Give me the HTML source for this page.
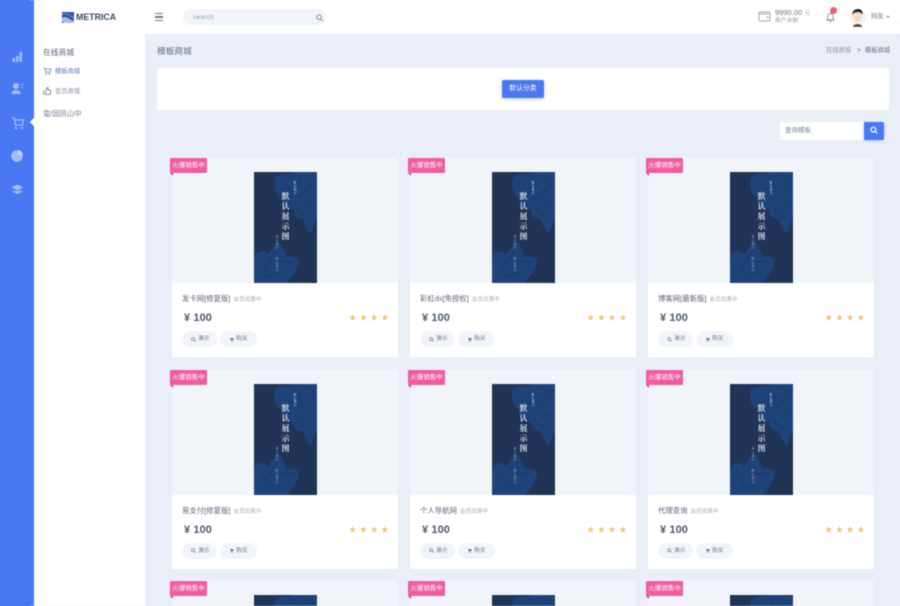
<!DOCTYPE html>
<html lang="zh"><head><meta charset="utf-8"><title>模板商城</title>
<style>
*{box-sizing:border-box}
html,body{margin:0;padding:0;width:900px;height:606px;overflow:hidden}
body{position:relative;background:#e9eef7;font-family:"Liberation Sans","Noto Sans CJK SC",sans-serif;color:#50596e}
#wrap{position:absolute;left:0;top:0;width:900px;height:606px;filter:blur(.5px);overflow:hidden}
.a{position:absolute;white-space:nowrap}
.card{position:absolute;width:226px;height:200px;background:#fff}
.short{height:26px}
.img{position:absolute;left:0;top:0;width:226px;height:126px;background:#f1f5fa}
.short .img{height:26px}
.cover{position:absolute;left:82px;top:15px;width:63px;height:111px;display:block}
.clip{position:absolute;left:82px;top:15px;width:63px;height:11px;overflow:hidden}
.clip svg{display:block;width:63px;height:111px}
.badge{position:absolute;left:-2px;top:1px;width:37px;height:15px;background:#f05c9e;color:#fff;font-size:6.500px;line-height:15px;text-align:center;border-radius:1px}
.badge:after{content:"";position:absolute;left:0;top:15px;border-top:3px solid #c4447f;border-left:3px solid transparent}
.t{position:absolute;left:10px;top:136px;font-size:7.400px;line-height:12px;color:#5d6678;white-space:nowrap}
.t small{font-size:5.600px;color:#a4abb8;margin-left:1px}
.p{position:absolute;left:12px;top:154px;font-size:11px;line-height:14px;font-weight:bold;color:#50596e;letter-spacing:.1px}
.s{position:absolute;left:177px;top:154px;font-size:7.500px;line-height:14px;color:#e9c675;letter-spacing:3.200px;white-space:nowrap}
.b{position:absolute;top:174px;height:16px;background:#f1f5fa;border-radius:8px;font-size:5.800px;line-height:16px;color:#717a8c;white-space:nowrap}
.b svg{position:absolute;left:9px;top:5.500px;width:5px;height:5px}
.b span{position:absolute;left:16px;top:0}
.b1{left:10px;width:35px}.b2{left:48px;width:37px}
.cw{position:absolute;left:82px;top:15px;width:63px;height:111px;color:#dfe6f1;font-family:"Liberation Serif","Noto Serif CJK SC",serif}
.cw i{position:absolute;font-style:normal;writing-mode:vertical-rl;white-space:nowrap}
.cw .m{left:27px;top:20px;font-size:7.800px;line-height:9px;letter-spacing:2.200px;font-weight:bold}
.cw .n{left:39px;top:9px;font-size:2.800px;line-height:3px;letter-spacing:.7px}
.cw .u{left:21px;top:63px;font-size:2.800px;line-height:3px;letter-spacing:1px;color:#a9b8d0}
.cw .v{left:21px;top:85px;font-size:2.800px;line-height:3px;letter-spacing:1px;color:#a9b8d0}
</style></head><body>
<div class="a" style="left:0;top:0;width:20px;height:606px;background:#4a78f5"></div>
<div class="a" style="left:40px;top:0;width:860px;height:20px;background:#fff"></div>
<div class="a" style="left:20px;top:0;width:10px;height:606px;background:#4a78f5"></div>
<div id="wrap">
<svg width="0" height="0" style="position:absolute"><defs>
<symbol id="cv" viewBox="0 0 63 111">
<rect width="63" height="111" fill="#1f3456"/>
<g fill="#1e4379">
<path d="M21 5C28 0 36 3 40 0H63V45L57 62C53 58 50 53 49 47 43 48 39 44 39 37 33 38 27 33 28 26 22 24 18 15 21 5Z"/>
<path d="M1 82C7 77 12 79 14 83 17 77 21 72 25 70 29 75 32 80 32 85 37 83 44 85 45 89 44 98 39 105 32 111H0V92Z"/>
</g>
<g fill="none" stroke="#1b3a68" stroke-width=".9">
<path d="M38 3L46 15M31 12L44 26M44 26L60 11M50 34L62 28M42 35L54 47M48 2L60 8M13 93L24 76M24 90L40 90M9 105L29 100M5 86L14 100"/>
</g>
</symbol>
<symbol id="mg" viewBox="0 0 6 6"><circle cx="2.500" cy="2.500" r="1.800" fill="none" stroke="#717a8c" stroke-width=".8"/><path d="M3.800 3.800L5.500 5.500" stroke="#717a8c" stroke-width=".8"/></symbol>
<symbol id="ct" viewBox="0 0 6 6"><path d="M.5 .8h1l.5 3h3l.5-2.300H2z" fill="#5d6678"/><circle cx="2.500" cy="5" r=".6" fill="#5d6678"/><circle cx="4.500" cy="5" r=".6" fill="#5d6678"/></symbol>
</defs></svg>

<!-- sidebar -->
<div class="a" style="left:0;top:0;width:34px;height:606px;background:#4a78f5"></div>
<div class="a" style="left:34px;top:34px;width:111px;height:572px;background:#fff"></div>
<svg class="a" style="left:10px;top:48px;opacity:.85" width="15" height="155" viewBox="0 0 15 155" fill="#b5c9fa">
<path d="M2.500 10h2.500v4H2.500zM6 8h2.500v6H6zM9.500 4h2.500v10H9.500z"/>
<circle cx="6" cy="38" r="3"/><path d="M1.500 46c0-3 2-4 4.500-4s4.500 1 4.500 4z"/><path d="M10 36h4v1h-4zM10 39h3v1h-3z" fill="#94b0f8"/>
<path d="M2 70h2l1.500 7h7l1-5H5" fill="none" stroke="#b5c9fa" stroke-width="1.300"/><circle cx="6" cy="80" r="1.100"/><circle cx="12" cy="80" r="1.100"/>
<circle cx="7" cy="108" r="5.800"/><path d="M8 102a6 6 0 0 1 5 5h-5z" fill="#dfe8fe"/>
<path d="M7.500 137l5 2.500-5 2.500-5-2.500zM2.500 143l5 2.500 5-2.500" stroke="#b5c9fa" stroke-width=".8"/>
</svg>
<div class="a" style="left:30.500px;top:119px;width:6px;height:6px;background:#fff;transform:rotate(45deg)"></div>

<div class="a" style="left:43px;top:46.500px;font-size:7.800px;line-height:12px;color:#5a6375">在线商城</div>
<svg class="a" style="left:43px;top:67px" width="9" height="8" viewBox="0 0 9 8" fill="none" stroke="#5f7fc4" stroke-width=".7"><path d="M.5 1h1.300l1 4h4.200l1-3H2.200"/><circle cx="3.300" cy="6.800" r=".5"/><circle cx="6.500" cy="6.800" r=".5"/></svg>
<div class="a" style="left:55px;top:67px;font-size:6.300px;line-height:10px;color:#5f7fc4">模板商城</div>
<svg class="a" style="left:43px;top:87px" width="9" height="8" viewBox="0 0 9 8" fill="none" stroke="#6f7787" stroke-width=".8"><path d="M.5 3.500v4M2.500 3.500l2-3 .8.600-.4 2h3l-.7 4.400H2.500z"/></svg>
<div class="a" style="left:55px;top:87px;font-size:6.300px;line-height:10px;color:#8a91a0">会员商城</div>
<div class="a" style="left:43px;top:108.500px;font-size:7.400px;line-height:10px;color:#7a8292;letter-spacing:-.1px">電/固訊山中</div>

<!-- header -->
<div class="a" style="left:34px;top:0;width:866px;height:34px;background:#fff"></div>
<svg class="a" style="left:62px;top:12px" width="12" height="11" viewBox="0 0 12 11"><rect width="12" height="11" fill="#2f55a8"/><path d="M0 6c3-2 6 0 9 2l3 1v2H2L0 9z" fill="#a9bfea"/><path d="M0 2c4-1 7 1 12 4" stroke="#6f8fd6" fill="none"/></svg>
<div class="a" style="left:76px;top:11px;font-size:8.800px;line-height:12px;font-weight:bold;color:#3d4a66">METRICA</div>
<div class="a" style="left:155px;top:13px;width:8px;height:8px;border-top:1.200px solid #6f7787;border-bottom:1.200px solid #6f7787"></div>
<div class="a" style="left:155px;top:16.400px;width:8px;height:1.200px;background:#6f7787"></div>
<div class="a" style="left:183px;top:9px;width:143px;height:16px;background:#f1f5fa;border-radius:8px"></div>
<div class="a" style="left:193px;top:12.500px;font-size:6.500px;line-height:10px;color:#98a0b0;letter-spacing:.3px">search</div>
<svg class="a" style="left:316px;top:13.500px" width="7" height="8" viewBox="0 0 7 8" fill="none" stroke="#8b93a5" stroke-width="1"><circle cx="3" cy="3.200" r="2.200"/><path d="M4.700 5l1.800 2"/></svg>

<svg class="a" style="left:758px;top:10px" width="13" height="12" viewBox="0 0 13 12" fill="none" stroke="#9aa2b1" stroke-width=".9"><rect x="1" y="2" width="11" height="9" rx="1"/><path d="M1 4h11"/><circle cx="9.700" cy="7.200" r=".5" fill="#9aa2b1"/></svg>
<div class="a" style="left:775px;top:7px;font-size:7.500px;line-height:11px;color:#6c7485">9990.00 <span style="font-size:6px;color:#a4abb8">元</span></div>
<div class="a" style="left:775px;top:17px;font-size:5.800px;line-height:9px;color:#9aa2b1">账户余额</div>
<svg class="a" style="left:825px;top:11px" width="11" height="12" viewBox="0 0 11 12" fill="none" stroke="#7d8595" stroke-width=".9"><path d="M2 9c1-1 1-2 1-4a2.500 2.500 0 0 1 5 0c0 2 0 3 1 4zM4.500 10.500h2"/></svg>
<div class="a" style="left:830px;top:7px;width:7px;height:7px;border-radius:50%;background:#ef5f6d"></div>
<svg class="a" style="left:849px;top:8px" width="17" height="19" viewBox="0 0 17 19"><circle cx="8.500" cy="9.500" r="8.500" fill="#f7f3f1"/><ellipse cx="8.500" cy="8.500" rx="4.500" ry="5.500" fill="#f4dcc8"/><path d="M3.500 7C3 3 6 1 9 1s5 2 4.500 6C13 5 11 4 8.500 4S4 5 3.500 7z" fill="#1d1d22"/><path d="M4 19c0-2 2-3 4.500-3s4.500 1 4.500 3z" fill="#555"/></svg>
<div class="a" style="left:871px;top:12px;font-size:6.500px;line-height:10px;color:#7d8595">网友</div>
<div class="a" style="left:886px;top:16px;width:0;height:0;border-top:2px solid #8b93a5;border-left:2px solid transparent;border-right:2px solid transparent"></div>

<!-- page head -->
<div class="a" style="left:157px;top:45px;font-size:8.700px;line-height:12px;color:#636c7e">模板商城</div>
<div class="a" style="left:826px;top:46px;font-size:6.300px;line-height:10px;color:#8f97a7">在线商城</div>
<div class="a" style="left:857px;top:46px;font-size:6.300px;line-height:10px;color:#6c7485">&gt;</div>
<div class="a" style="left:865px;top:46px;font-size:6.300px;line-height:10px;color:#6c7485">模板商城</div>

<div class="a" style="left:157px;top:68px;width:732px;height:42px;background:#fff"></div>
<div class="a" style="left:502px;top:80px;width:42px;height:18px;background:#4a78ee;border-radius:2px;color:#fff;font-size:6.800px;line-height:18px;text-align:center;box-shadow:0 1px 3px rgba(74,120,238,.35)">默认分类</div>

<div class="a" style="left:780px;top:122px;width:84px;height:18px;background:#fff"></div>
<div class="a" style="left:785px;top:126px;font-size:6.500px;line-height:10px;color:#7d8595">查询模板</div>
<div class="a" style="left:864px;top:122px;width:20px;height:18px;background:#4a78ee;border-radius:0 2px 2px 0;box-shadow:0 1px 3px rgba(74,120,238,.35)"></div>
<svg class="a" style="left:870px;top:126px" width="8" height="9" viewBox="0 0 8 9" fill="none" stroke="#fff" stroke-width="1.200"><circle cx="3.400" cy="3.600" r="2.400"/><path d="M5.200 5.500l2 2"/></svg>

<!-- row 1 -->
<div class="card" style="left:172px;top:157px"><div class="img"></div><svg class="cover"><use href="#cv" width="63" height="111"/></svg><div class="cw"><i class="m">默认展示图</i><i class="n">默认展示</i><i class="u">展示图片</i><i class="v">默认展示</i></div><div class="badge">火爆销售中</div><div class="t">发卡网[修复版] <small>会员优惠中</small></div><div class="p">¥ 100</div><div class="s">★★★★</div><div class="b b1"><svg><use href="#mg" width="5" height="5"/></svg><span>演示</span></div><div class="b b2"><svg><use href="#ct" width="5" height="5"/></svg><span>购买</span></div></div>
<div class="card" style="left:410px;top:157px"><div class="img"></div><svg class="cover"><use href="#cv" width="63" height="111"/></svg><div class="cw"><i class="m">默认展示图</i><i class="n">默认展示</i><i class="u">展示图片</i><i class="v">默认展示</i></div><div class="badge">火爆销售中</div><div class="t">彩虹ds[免授权] <small>会员优惠中</small></div><div class="p">¥ 100</div><div class="s">★★★★</div><div class="b b1"><svg><use href="#mg" width="5" height="5"/></svg><span>演示</span></div><div class="b b2"><svg><use href="#ct" width="5" height="5"/></svg><span>购买</span></div></div>
<div class="card" style="left:648px;top:157px"><div class="img"></div><svg class="cover"><use href="#cv" width="63" height="111"/></svg><div class="cw"><i class="m">默认展示图</i><i class="n">默认展示</i><i class="u">展示图片</i><i class="v">默认展示</i></div><div class="badge">火爆销售中</div><div class="t">博客网[最新版] <small>会员优惠中</small></div><div class="p">¥ 100</div><div class="s">★★★★</div><div class="b b1"><svg><use href="#mg" width="5" height="5"/></svg><span>演示</span></div><div class="b b2"><svg><use href="#ct" width="5" height="5"/></svg><span>购买</span></div></div>
<!-- row 2 -->
<div class="card" style="left:172px;top:368.500px;height:200.500px"><div class="img"></div><svg class="cover"><use href="#cv" width="63" height="111"/></svg><div class="cw"><i class="m">默认展示图</i><i class="n">默认展示</i><i class="u">展示图片</i><i class="v">默认展示</i></div><div class="badge">火爆销售中</div><div class="t">易支付[修复版] <small>会员优惠中</small></div><div class="p">¥ 100</div><div class="s">★★★★</div><div class="b b1"><svg><use href="#mg" width="5" height="5"/></svg><span>演示</span></div><div class="b b2"><svg><use href="#ct" width="5" height="5"/></svg><span>购买</span></div></div>
<div class="card" style="left:410px;top:368.500px;height:200.500px"><div class="img"></div><svg class="cover"><use href="#cv" width="63" height="111"/></svg><div class="cw"><i class="m">默认展示图</i><i class="n">默认展示</i><i class="u">展示图片</i><i class="v">默认展示</i></div><div class="badge">火爆销售中</div><div class="t">个人导航网 <small>会员优惠中</small></div><div class="p">¥ 100</div><div class="s">★★★★</div><div class="b b1"><svg><use href="#mg" width="5" height="5"/></svg><span>演示</span></div><div class="b b2"><svg><use href="#ct" width="5" height="5"/></svg><span>购买</span></div></div>
<div class="card" style="left:648px;top:368.500px;height:200.500px"><div class="img"></div><svg class="cover"><use href="#cv" width="63" height="111"/></svg><div class="cw"><i class="m">默认展示图</i><i class="n">默认展示</i><i class="u">展示图片</i><i class="v">默认展示</i></div><div class="badge">火爆销售中</div><div class="t">代理查询 <small>会员优惠中</small></div><div class="p">¥ 100</div><div class="s">★★★★</div><div class="b b1"><svg><use href="#mg" width="5" height="5"/></svg><span>演示</span></div><div class="b b2"><svg><use href="#ct" width="5" height="5"/></svg><span>购买</span></div></div>
<!-- row 3 -->
<div class="card short" style="left:172px;top:580px"><div class="img"></div><div class="clip"><svg><use href="#cv" width="63" height="111"/></svg></div><div class="badge">火爆销售中</div></div>
<div class="card short" style="left:410px;top:580px"><div class="img"></div><div class="clip"><svg><use href="#cv" width="63" height="111"/></svg></div><div class="badge">火爆销售中</div></div>
<div class="card short" style="left:648px;top:580px"><div class="img"></div><div class="clip"><svg><use href="#cv" width="63" height="111"/></svg></div><div class="badge">火爆销售中</div></div>
</div>
</body></html>
